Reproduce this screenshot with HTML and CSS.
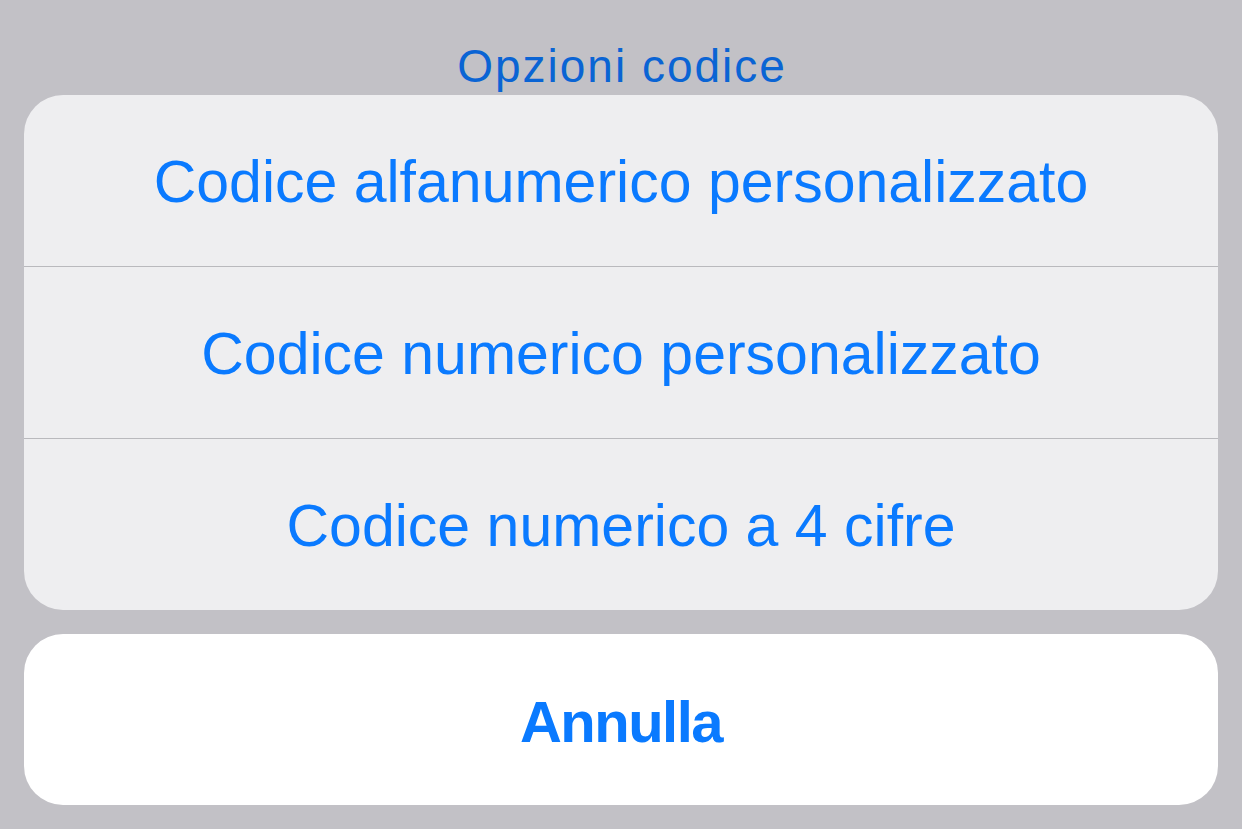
FILE: index.html
```html
<!DOCTYPE html>
<html lang="it">
<head>
<meta charset="utf-8">
<title>Opzioni codice</title>
<link rel="stylesheet" href="styles.css">
</head>
<body>
<div class="sheet">
  <div class="title">Opzioni codice</div>
  <div class="group">
    <div class="item">Codice alfanumerico personalizzato</div>
    <div class="sep"></div>
    <div class="item">Codice numerico personalizzato</div>
    <div class="sep"></div>
    <div class="item">Codice numerico a 4 cifre</div>
  </div>
  <div class="cancel">Annulla</div>
</div>
</body>
</html>
```

FILE: styles.css
```css
html, body {
  margin: 0;
  padding: 0;
  background: #c2c1c6;
  width: 1242px;
  height: 829px;
  overflow: hidden;
}
.sheet {
  display: flex;
  flex-direction: column;
  padding: 0 24px 24px;
  height: 829px;
  box-sizing: border-box;
  font-family: "Liberation Sans", Arial, sans-serif;
}
.title {
  height: 95px;
  box-sizing: border-box;
  padding-top: 41px;
  padding-left: 2px;
  text-align: center;
  font-size: 46px;
  line-height: 50px;
  letter-spacing: 2px;
  color: #0a64d4;
  white-space: nowrap;
  overflow: hidden;
}
.group {
  background: #eeeef0;
  border-radius: 39px;
  display: flex;
  flex-direction: column;
  overflow: hidden;
}
.item {
  height: 171px;
  box-sizing: border-box;
  padding-top: 3px;
  display: flex;
  align-items: center;
  justify-content: center;
  font-size: 59px;
  color: #0a7aff;
  white-space: nowrap;
}
.sep {
  height: 1px;
  background: #b9b9bd;
}
.cancel {
  margin-top: 24px;
  height: 171px;
  box-sizing: border-box;
  padding-top: 3px;
  background: #ffffff;
  border-radius: 39px;
  display: flex;
  align-items: center;
  justify-content: center;
  font-size: 58px;
  font-weight: bold;
  letter-spacing: -1.5px;
  color: #0a7aff;
}
```
